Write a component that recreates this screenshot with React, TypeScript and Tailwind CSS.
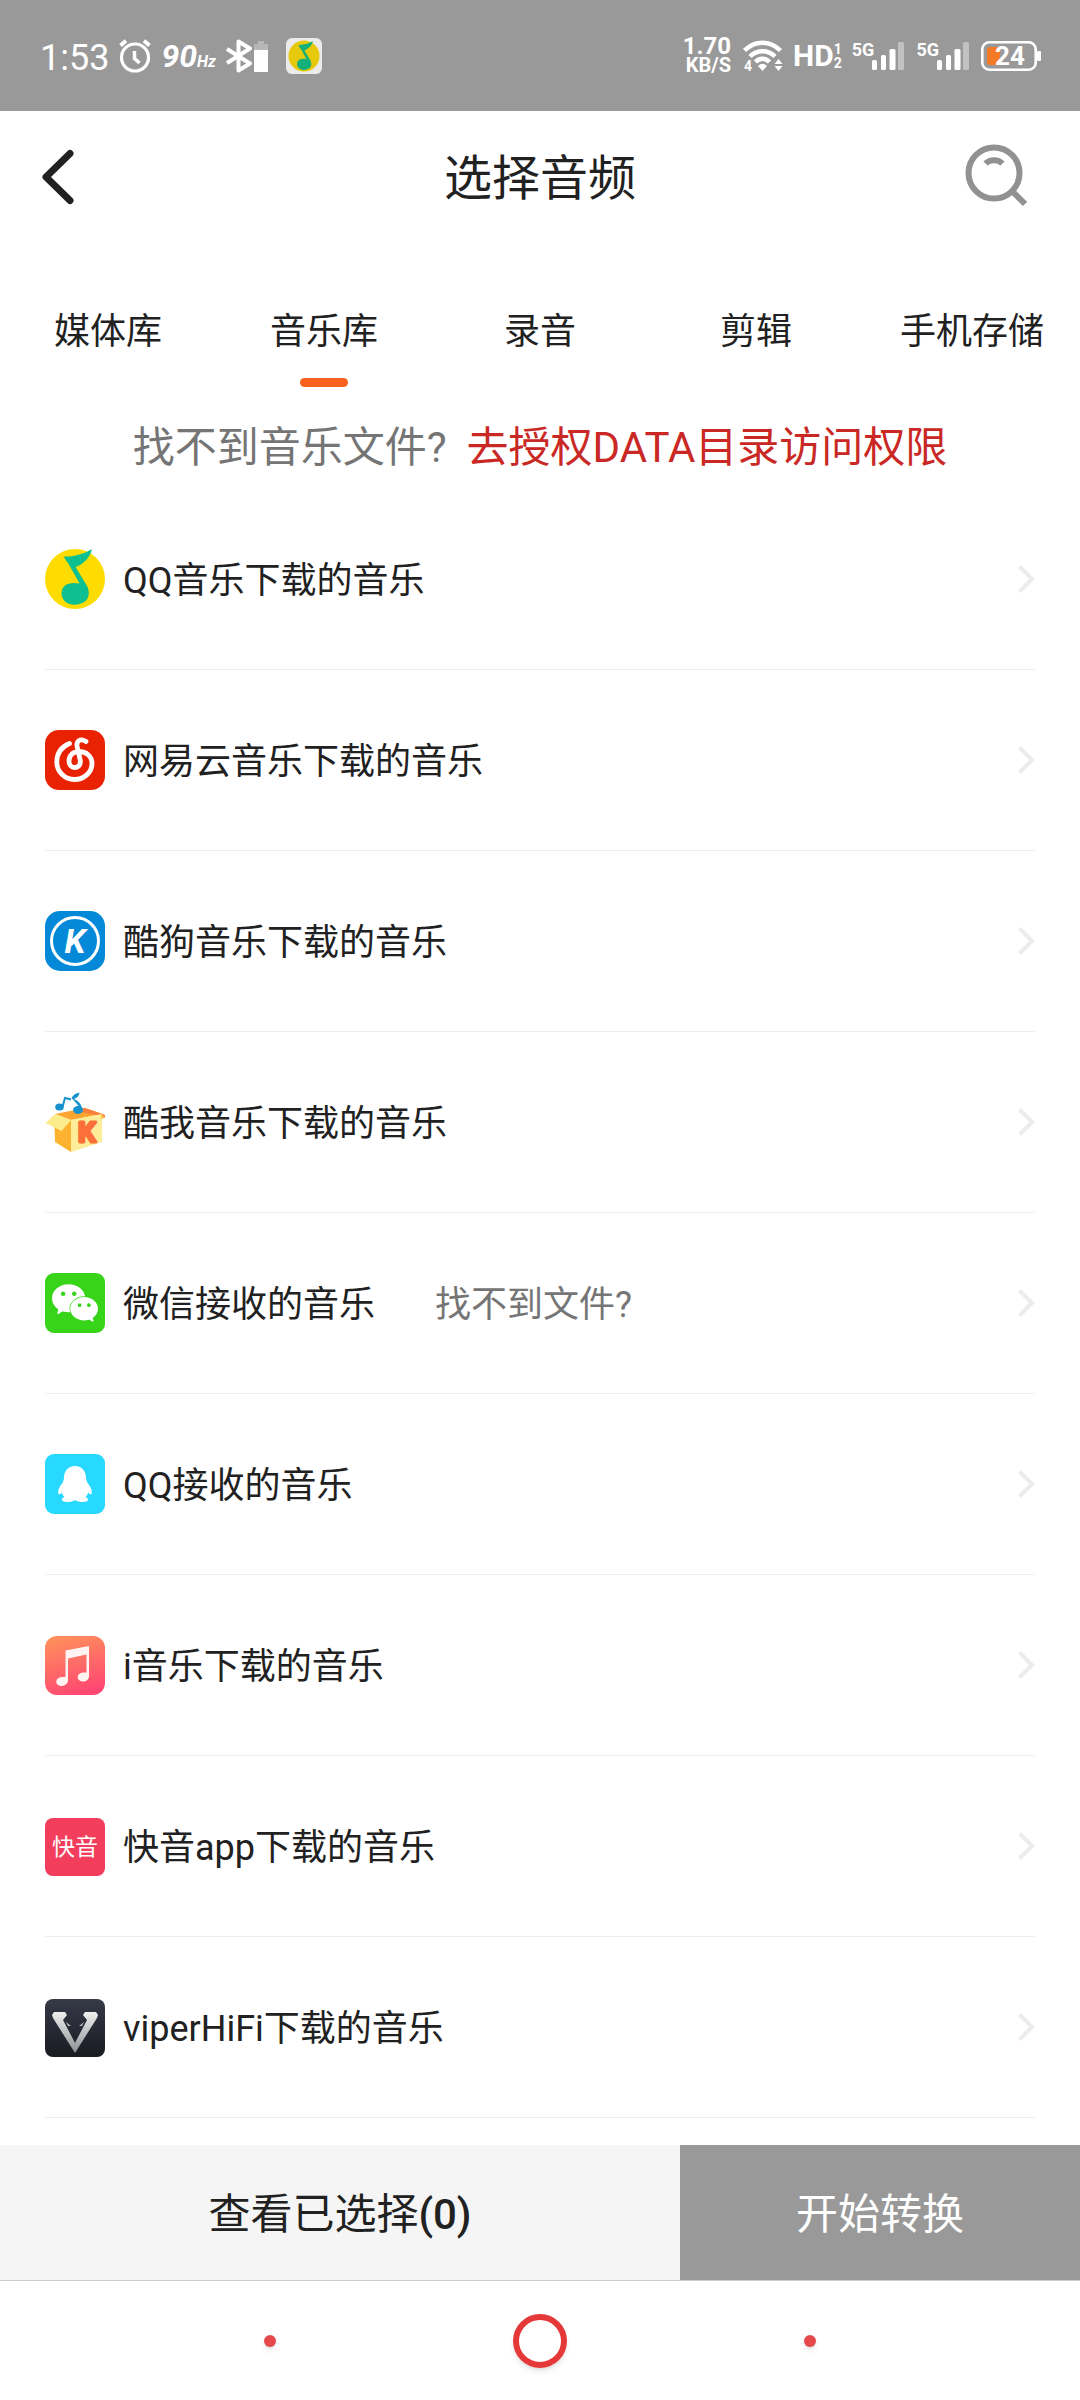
import React, { useState } from 'react';
import { SiWechat } from 'react-icons/si';

const notePath =
    'M19 7.5C29 8 40 4.5 47 0C45 9 38 15.5 30.5 18L41.5 36C45 42 44.5 49 40 52.5C35 56.5 25 57 20 52.5C14 46.5 16 37 23 35C27 33.5 31 34 34.5 34.5L25 17.5C23 13 20 11.5 19 7.5Z';

const QQMusicIcon = () => (
    <svg viewBox="0 0 60 60" className="size-full">
        <circle cx="30" cy="30" r="30" fill="#ffdc00" />
        <path d={notePath} fill="#0ebf8f" />
    </svg>
);

const NeteaseIcon = () => (
    <svg viewBox="0 0 60 60" className="size-full">
        <rect width="60" height="60" rx="14" fill="#e92204" />
        <path
            d="M24.500 13.500C16 17 11.800 24 11.800 32C11.800 42 20 49.500 29.500 49.500C39 49.500 47 42.500 47 33.500C47 26 41 21.500 34 21.500C27.500 21.500 24 26 24 31C24 35 26.500 37.500 29.500 37.500C33.500 37.500 36 34.500 35.200 30L32.200 17C31 11.500 35 7.500 41 11.500"
            fill="none"
            stroke="#fff"
            strokeWidth="4.800"
            strokeLinecap="round"
        />
    </svg>
);

const KugouIcon = () => (
    <svg viewBox="0 0 60 60" className="size-full">
        <rect width="60" height="60" rx="15" fill="#0489d8" />
        <circle cx="30" cy="30" r="23.5" fill="none" stroke="#fff" strokeWidth="3" />
        <text x="30" y="42" textAnchor="middle" fontFamily="Roboto" fontSize="34" fontWeight="700" fontStyle="italic" fill="#fff">K</text>
    </svg>
);

const KuwoIcon = () => (
    <svg viewBox="0 0 60 60" className="size-full">
        <path d="M10 22L40 16L58 22L26 28Z" fill="#fca62f" />
        <path d="M33 17L40 16L60 23V26L56 24L39 21Z" fill="#fb7f3e" />
        <path d="M9.500 34L26 28V60L10 50Z" fill="#fdb32f" />
        <path d="M26 28L57 22V50L26 60Z" fill="#fdec98" />
        <path d="M0.500 31L10 22L26 28L16.500 39Z" fill="#fdec8c" />
        <path d="M56 22L60 26L56 27Z" fill="#fbc54a" />
        <text x="42" y="50" textAnchor="middle" fontFamily="Roboto" fontSize="28" fontWeight="700" fill="#fb7038" stroke="#fb7038" strokeWidth="3" strokeLinejoin="round">K</text>
        <ellipse cx="14.500" cy="15" rx="4.300" ry="3.500" fill="#1592cc" />
        <path d="M17.500 15L20 6L26 7.500" fill="none" stroke="#1592cc" strokeWidth="2" />
        <ellipse cx="33" cy="18" rx="5" ry="4" fill="#1592cc" />
        <path d="M37 16.500C36 11 33 9 29 7C32 6 34 4 34.500 0.500C31 1 28 3 26.500 6C29 9 33 12 34.500 16Z" fill="#1592cc" />
    </svg>
);

const WechatIcon = () => (
    <span className="flex size-full items-center justify-center rounded-[9px] bg-[#37d41a]">
        <SiWechat className="size-[46px] text-white" />
    </span>
);

const QQIcon = () => (
    <svg viewBox="0 0 60 60" className="size-full">
        <rect width="60" height="60" rx="9" fill="#28d9ff" />
        <path
            d="M30 12C37 12 41 17 41 24C41 26 42 27 42.500 29C46 33 47.500 37 46.500 40C45.500 41 44 39.500 43.200 38.500C42.500 40.500 41.500 42 40.500 43C43 44 44 46 42 47.300C39 48.600 33 48.200 30 46C27 48.200 21 48.600 18 47.300C16 46 17 44 19.500 43C18.500 42 17.500 40.500 16.800 38.500C16 39.500 14.500 41 13.500 40C12.500 37 14 33 17.500 29C18 27 19 26 19 24C19 17 23 12 30 12Z"
            fill="#fff"
        />
    </svg>
);

const IMusicIcon = () => (
    <svg viewBox="0 0 60 60" className="size-full">
        <defs>
            <linearGradient id="imusic" x1="0.300" y1="0" x2="0.600" y2="1">
                <stop offset="0" stopColor="#ff8f5c" />
                <stop offset="1" stopColor="#ff4673" />
            </linearGradient>
        </defs>
        <rect y="1" width="60" height="59" rx="12" fill="url(#imusic)" />
        <g fill="#fff4f2">
            <path d="M20.500 15.500L44 11V41H41.500V19.500L23 23.500V45H20.500Z" />
            <path d="M23 42V45C23 48.500 20 51 16 51C9.500 51 9.500 42 17 42Z" />
            <path d="M44 37.500V41C44 44.500 41.500 46.500 37.500 46.500C31 46.500 31 37.500 38 37.500Z" />
        </g>
    </svg>
);

const KuaiyinIcon = () => (
    <span className="mt-0.5 flex h-[58px] w-full items-center justify-center rounded-[8px] bg-[#f23e5c] text-[23px] leading-none text-white">
        快音
    </span>
);

const ViperIcon = () => (
    <svg viewBox="0 0 60 60" className="size-full">
        <defs>
            <linearGradient id="viperBg" x1="0" y1="0" x2="0" y2="1">
                <stop offset="0" stopColor="#363a47" />
                <stop offset="1" stopColor="#191b22" />
            </linearGradient>
            <linearGradient id="viperBody" x1="0" y1="0" x2="0" y2="1">
                <stop offset="0" stopColor="#f0f0f0" />
                <stop offset="1" stopColor="#8d8f93" />
            </linearGradient>
        </defs>
        <rect y="2" width="60" height="58" rx="8" fill="url(#viperBg)" />
        <path
            d="M9 15H20L22 18L18 23L29 44L30 46L31 44L42 23L38 18L40 15H51L53 18L52 21L30 56L8 21L7 18Z"
            fill="url(#viperBody)"
        />
        <path d="M21 25L26 29H23Z M39 25L34 29H37Z" fill="#b9bbc0" />
    </svg>
);

const sources = [
    { label: 'QQ音乐下载的音乐', icon: QQMusicIcon },
    { label: '网易云音乐下载的音乐', icon: NeteaseIcon },
    { label: '酷狗音乐下载的音乐', icon: KugouIcon },
    { label: '酷我音乐下载的音乐', icon: KuwoIcon },
    { label: '微信接收的音乐', icon: WechatIcon, help: '找不到文件?' },
    { label: 'QQ接收的音乐', icon: QQIcon },
    { label: 'i音乐下载的音乐', icon: IMusicIcon },
    { label: '快音app下载的音乐', icon: KuaiyinIcon },
    { label: 'viperHiFi下载的音乐', icon: ViperIcon },
];

const tabs = ['媒体库', '音乐库', '录音', '剪辑', '手机存储'];

const Signal = () => (
    <div className="flex">
        <span className="text-[18px] leading-4 font-bold">5G</span>
        <svg viewBox="0 0 32 28" className="-ml-0.5 h-7 w-8" fill="#fff">
            <rect y="18" width="5" height="10" rx="1.500" />
            <rect x="9" y="13" width="5" height="15" rx="1.500" />
            <rect x="17.500" y="7" width="6" height="21" rx="1.500" />
            <rect x="26" width="6" height="28" rx="1.500" opacity="0.400" />
        </svg>
    </div>
);

const StatusBar = () => (
    <div className="flex h-[111px] items-center justify-between bg-[#999] pr-[39px] pl-10 text-white">
        <div className="flex items-center">
            <span className="pt-1 text-[36px] leading-none">1:53</span>
            <svg viewBox="0 0 32 34" className="ml-2.5 h-[34px] w-8" fill="none" stroke="#fff">
                <circle cx="16" cy="18.500" r="13.500" strokeWidth="3.200" />
                <path d="M1.500 6.500L7 1.800M30.500 6.500L25 1.800" strokeWidth="4" />
                <path d="M15.500 12V19.500L20.500 24" strokeWidth="3.500" />
            </svg>
            <span className="ml-2.5 flex items-baseline font-bold italic">
                <span className="text-[32px] leading-none">90</span>
                <span className="text-[16px] leading-none">Hz</span>
            </span>
            <svg viewBox="0 0 42 34" className="ml-2.5 h-[34px] w-[42px]">
                <path d="M1 10L24 24.500L12.500 31.500V2.500L24 9.500L1 24" fill="none" stroke="#fff" strokeWidth="4" strokeLinejoin="round" />
                <path d="M32 2H38V5H42V11H28V5H32Z" fill="#fff" opacity="0.300" />
                <rect x="28" y="11" width="14" height="22" fill="#fff" />
            </svg>
            <svg viewBox="0 0 36 36" className="ml-[18px] size-9">
                <rect width="36" height="36" rx="6" fill="#ebebeb" />
                <circle cx="18" cy="18" r="15.500" fill="#e6c90a" />
                <path d={notePath} fill="#14b07a" transform="translate(2.500 3) scale(0.520)" />
            </svg>
        </div>
        <div className="flex items-center">
            <div className="flex flex-col items-end font-bold">
                <span className="text-[24px] leading-[20px]">1.70</span>
                <span className="text-[20px] leading-[19px]">KB/S</span>
            </div>
            <svg viewBox="0 0 40 34" className="ml-3 h-[34px] w-10" fill="none" stroke="#fff" strokeWidth="4.500">
                <path d="M1.500 11.500C12 1 27 1 37.500 11.500" />
                <path d="M7 17.500C14 10.500 25 10.500 32 17.500" />
                <path d="M12.500 23C16.500 18.500 22.500 18.500 26.500 23" />
                <path d="M15 27Q19.500 22.500 24 27L19.500 32Z" fill="#fff" stroke="none" />
                <path d="M31.500 25L35.500 20L39.500 25ZM31.500 27L35.500 32L39.500 27Z" fill="#fff" stroke="none" />
                <text x="1" y="32" fontFamily="Roboto" fontSize="14" fontWeight="700" fill="#fff" stroke="none">4</text>
            </svg>
            <span className="ml-2.5 text-[30px] leading-none font-bold">HD</span>
            <span className="flex flex-col text-[14px] leading-[14px] font-bold">
                <span>1</span>
                <span>2</span>
            </span>
            <div className="ml-2.5 flex gap-3">
                <Signal />
                <Signal />
            </div>
            <svg viewBox="0 0 60 30" className="ml-3 h-[30px] w-[60px]">
                <rect x="1.300" y="1.300" width="53.400" height="27.400" rx="7" fill="none" stroke="#fff" strokeWidth="2.600" />
                <rect x="56" y="10" width="4" height="10" rx="1" fill="#fff" />
                <rect x="6" y="6" width="13" height="18" rx="3" fill="#f57a25" />
                <text x="29" y="24" textAnchor="middle" fontFamily="Roboto" fontSize="26" fontWeight="700" fill="#fff">24</text>
            </svg>
        </div>
    </div>
);

const App = () => {
    const [active, setActive] = useState(1);

    return (
        <div className="flex min-h-screen flex-col bg-white font-['Roboto','Noto_Sans_CJK_SC',sans-serif] text-[#212121]" lang="zh-CN">
            <StatusBar />

            <header className="grid h-[132px] grid-cols-[1fr_auto_1fr] items-center pr-[53px] pl-10">
                <button type="button" aria-label="返回" className="w-16">
                    <svg viewBox="0 0 36 56" className="h-14 w-9" fill="none" stroke="#212121" strokeWidth="7" strokeLinecap="round" strokeLinejoin="round">
                        <path d="M30 4.500L6 28L30 51.500" />
                    </svg>
                </button>
                <h1 className="pt-1 pl-[13px] text-[48px] leading-none">选择音频</h1>
                <button type="button" aria-label="搜索" className="mb-1 justify-self-end">
                    <svg viewBox="0 0 64 64" className="size-16" fill="none" stroke="#919191" strokeWidth="6">
                        <circle cx="31" cy="30" r="25.500" />
                        <path d="M22.500 20.500C27 16 35 16 39.500 20.500" />
                        <path d="M49 48L62 61" />
                    </svg>
                </button>
            </header>

            <div role="tablist" className="grid h-[162px] grid-cols-5 pt-[62px]">
                {tabs.map((tab, i) => (
                    <button
                        key={tab}
                        type="button"
                        role="tab"
                        aria-selected={i === active}
                        onClick={() => setActive(i)}
                        className="flex flex-col items-center gap-[19px] text-[36px] whitespace-nowrap"
                    >
                        <span className="leading-[54px]">{tab}</span>
                        {i === active && <span className="h-[9px] w-12 rounded-full bg-[#f9611e]" />}
                    </button>
                ))}
            </div>

            <p className="flex h-[84px] items-center justify-center gap-5 text-[42px] text-[#757575]">
                <span>找不到音乐文件?</span>
                <a href="#auth" className="text-[#c92824]">去授权DATA目录访问权限</a>
            </p>

            <ul className="flex-1 px-[45px]">
                {sources.map(({ label, icon: Icon, help }) => (
                    <li key={label} className="flex h-[181px] items-center border-b border-[#ededed] text-[36px]">
                        <a href="#source" className="flex items-center gap-[18px]">
                            <span className="size-[60px] shrink-0">
                                <Icon />
                            </span>
                            <span className="pt-[3px]">{label}</span>
                        </a>
                        {help && (
                            <a href="#help" className="ml-[60px] pt-[3px] text-[#757575]">{help}</a>
                        )}
                        <svg viewBox="0 0 18 30" className="ml-auto h-[30px] w-[18px]" fill="none" stroke="#ececec" strokeWidth="4">
                            <path d="M2.500 2.500L15 15L2.500 27.500" />
                        </svg>
                    </li>
                ))}
            </ul>

            <div className="grid h-[136px] grid-cols-[17fr_10fr] border-b border-[#ccc] text-[42px]">
                <button type="button" className="bg-[#f5f5f5] pt-[3px]">
                    查看已选择<span className="font-medium">(0)</span>
                </button>
                <button type="button" className="bg-[#999] pt-[3px] text-white">开始转换</button>
            </div>

            <nav className="grid h-[119px] grid-cols-3 items-center justify-items-center px-[12.5%]">
                <button type="button" aria-label="最近任务" className="size-3 rounded-full bg-[#e5484a] shadow-md" />
                <button type="button" aria-label="主页" className="size-[54px] rounded-full border-[6px] border-[#e53838] shadow-md" />
                <button type="button" aria-label="后退" className="size-3 rounded-full bg-[#e5484a] shadow-md" />
            </nav>
        </div>
    );
};

export default App;
